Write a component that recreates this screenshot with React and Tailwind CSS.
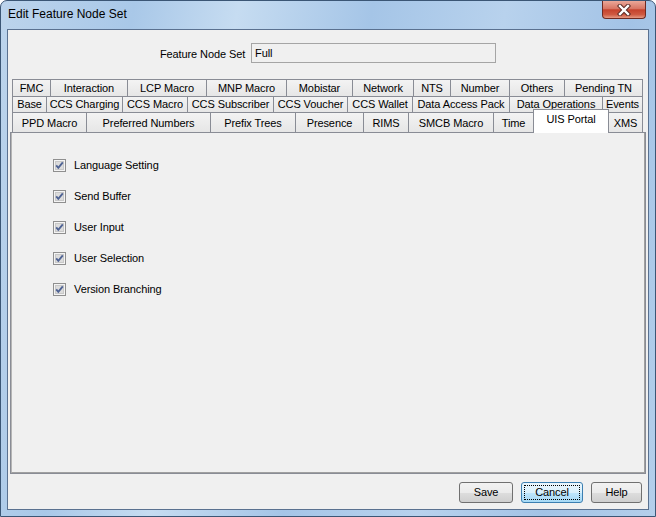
const row1 = [
  ["FMC", 38], ["Interaction", 77], ["LCP Macro", 79], ["MNP Macro", 80], ["Mobistar", 66],
  ["Network", 61], ["NTS", 37], ["Number", 59], ["Others", 55], ["Pending TN", 79],
];
const row2 = [
  ["Base", 34], ["CCS Charging", 76], ["CCS Macro", 65], ["CCS Subscriber", 86], ["CCS Voucher", 74],
  ["CCS Wallet", 65], ["Data Access Pack", 97], ["Data Operations", 93], ["Events", 41],
];
const row3 = [
  ["PPD Macro", 74], ["Preferred Numbers", 124], ["Prefix Trees", 85], ["Presence", 68], ["RIMS", 45],
  ["SMCB Macro", 85], ["Time", 40], ["UIS Portal", 75], ["XMS", 35],
];

const items = ["Language Setting", "Send Buffer", "User Input", "User Selection", "Version Branching"];

function Tab({ label, w, last, selected, tall }) {
  if (selected) {
    return (
      <div
        style={{ width: w + 1 }}
        className="relative z-10 -mb-px -mr-px flex h-[24px] items-start justify-center border border-b-0 border-[#898c95] bg-white pt-[1px]"
      >
        {label}
      </div>
    );
  }
  return (
    <div
      style={{ width: w }}
      className={
        "flex items-start justify-center border-t border-l border-[#898c95] bg-[linear-gradient(to_bottom,#f3f3f3,#e6e6e6)] " +
        (tall ? "h-[20px] pt-[2px] " : "h-full pt-[0px] ") +
        (last ? "border-r" : "")
      }
    >
      {label}
    </div>
  );
}

function Check() {
  return (
    <svg width="13" height="13" viewBox="0 0 13 13" className="shrink-0">
      <rect x="0.5" y="0.5" width="12" height="12" fill="#f4f4f4" stroke="#8f8f8f" />
      <rect x="2" y="2" width="9" height="9" fill="#dcdcdc" />
      <rect x="2.5" y="2.5" width="8" height="8" fill="none" stroke="#c8c8c8" />
      <path d="M3.2 6.4 L5.3 8.8 L9.8 3.4" fill="none" stroke="#4f6394" strokeWidth="1.9" />
    </svg>
  );
}

function Button({ children, w, focused }) {
  return (
    <div
      style={{ width: w }}
      className={
        "flex h-[21px] items-center justify-center rounded-[3px] border " +
        (focused
          ? "border-[#3c7fb1] bg-[linear-gradient(to_bottom,#eaf6fd_0%,#d9f0fc_50%,#bee6fd_51%,#a7d9f5_100%)] p-[2px]"
          : "border-[#707070] bg-[linear-gradient(to_bottom,#f2f2f2_0%,#ebebeb_50%,#dddddd_51%,#cfcfcf_100%)]")
      }
    >
      {focused ? (
        <div className="flex h-full w-full items-center justify-center border border-dotted border-black">{children}</div>
      ) : (
        children
      )}
    </div>
  );
}

export default function App() {
  return (
    <div
      className="flex h-[517px] w-[656px] flex-col overflow-hidden rounded-t-[7px] border border-[#3b5675] bg-[linear-gradient(100deg,#bcd4ec_0%,#a9c8e8_18%,#c6dcf1_32%,#a5c5e7_50%,#b8d2ed_68%,#a3c3e6_85%,#b4cfeb_100%)] text-[11px] tracking-[-0.1px] text-black"
      style={{ fontFamily: '"Liberation Sans", Arial, sans-serif' }}
    >
      <div className="flex h-[28px] shrink-0 items-start justify-between pl-[7px] pr-[9px]">
        <div className="pt-[4px] text-[12px] tracking-normal">Edit Feature Node Set</div>
        <div className="flex h-[18px] w-[44px] items-center justify-center rounded-b-[4px] border border-t-0 border-[#6e2a22] bg-[linear-gradient(to_bottom,#eaa899_0%,#d77564_45%,#c5422d_52%,#cf5a42_80%,#e59a84_100%)]">
          <svg width="14" height="12" viewBox="0 0 14 12">
            <path d="M3 2 L11 10 M11 2 L3 10" stroke="#5a2a24" strokeWidth="4.4" strokeLinecap="square" />
            <path d="M3 2 L11 10 M11 2 L3 10" stroke="#ffffff" strokeWidth="2.4" strokeLinecap="square" />
          </svg>
        </div>
      </div>

      <div className="mx-[6px] flex h-[481px] shrink-0 flex-col border border-[#5a7190] bg-[#f0f0f0]">
        <div className="flex justify-center gap-[6px] pt-[13px]">
          <div className="pt-[3px]">Feature Node Set</div>
          <div className="flex h-[20px] w-[245px] items-center border border-[#a5a5a5] bg-[#f0f0f0] pl-[3px]">Full</div>
        </div>

        <div className="mt-[16px] flex flex-col">
          <div className="ml-[4px] flex h-[17px] leading-[16px]">
            {row1.map(([l, w], i) => (
              <Tab key={l} label={l} w={w} last={i === row1.length - 1} />
            ))}
          </div>
          <div className="ml-[4px] flex h-[16px] leading-[15px]">
            {row2.map(([l, w], i) => (
              <Tab key={l} label={l} w={w} last={i === row2.length - 1} />
            ))}
          </div>
          <div className="ml-[4px] flex h-[20px] items-end leading-[17px]">
            {row3.map(([l, w], i) => (
              <Tab key={l} label={l} w={w} tall last={i === row3.length - 1} selected={l === "UIS Portal"} />
            ))}
          </div>
          <div className="ml-[2px] h-[342px] w-[636px] border border-[#898c95] bg-[#f0f0f0]">
            <div className="h-full border border-t-0 border-[#a0a0a0] border-l-[#b5b5b5] pl-[41px] pt-[26px]">
              <div className="flex flex-col gap-[18px]">
                {items.map((t) => (
                  <div key={t} className="flex h-[13px] items-center gap-[8px]">
                    <Check />
                    <span>{t}</span>
                  </div>
                ))}
              </div>
            </div>
          </div>
        </div>

        <div className="flex justify-end gap-[8px] pr-[6px] pt-[8px]">
          <Button w={54}>Save</Button>
          <Button w={62} focused>Cancel</Button>
          <Button w={51}>Help</Button>
        </div>
      </div>
    </div>
  );
}
